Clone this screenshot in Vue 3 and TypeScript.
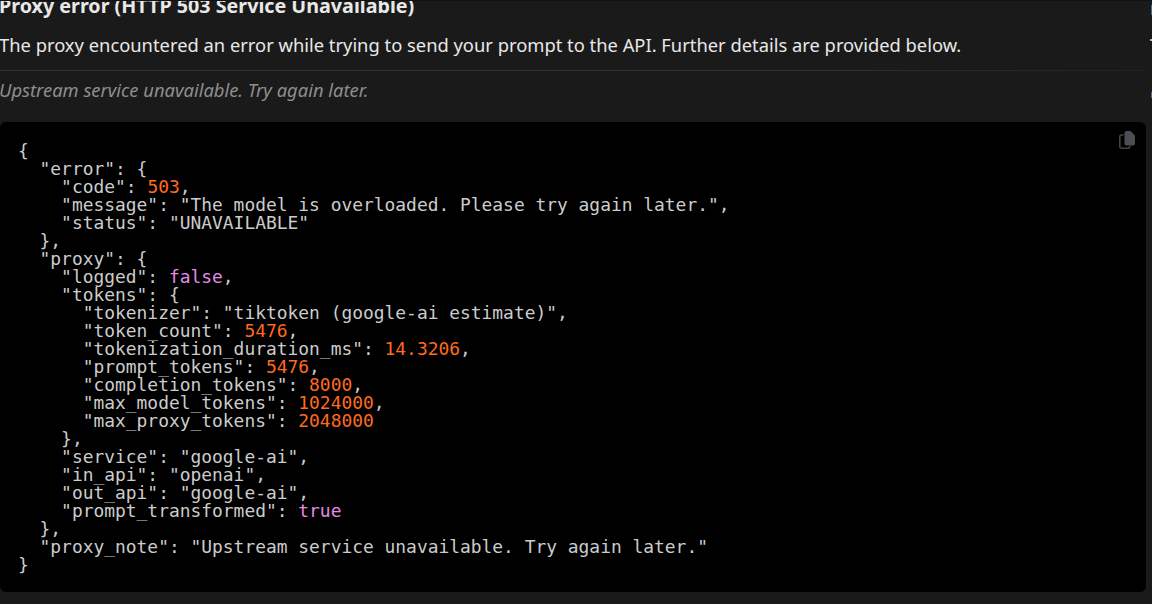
<script setup lang="ts">
const json: [string, string][][] = [
  [['p', '{']],
  [['p', '  "error": {']],
  [['p', '    "code": '], ['n', '503'], ['p', ',']],
  [['p', '    "message": "The model is overloaded. Please try again later.",']],
  [['p', '    "status": "UNAVAILABLE"']],
  [['p', '  },']],
  [['p', '  "proxy": {']],
  [['p', '    "logged": '], ['b', 'false'], ['p', ',']],
  [['p', '    "tokens": {']],
  [['p', '      "tokenizer": "tiktoken (google-ai estimate)",']],
  [['p', '      "token_count": '], ['n', '5476'], ['p', ',']],
  [['p', '      "tokenization_duration_ms": '], ['n', '14.3206'], ['p', ',']],
  [['p', '      "prompt_tokens": '], ['n', '5476'], ['p', ',']],
  [['p', '      "completion_tokens": '], ['n', '8000'], ['p', ',']],
  [['p', '      "max_model_tokens": '], ['n', '1024000'], ['p', ',']],
  [['p', '      "max_proxy_tokens": '], ['n', '2048000']],
  [['p', '    },']],
  [['p', '    "service": "google-ai",']],
  [['p', '    "in_api": "openai",']],
  [['p', '    "out_api": "google-ai",']],
  [['p', '    "prompt_transformed": '], ['b', 'true']],
  [['p', '  },']],
  [['p', '  "proxy_note": "Upstream service unavailable. Try again later."']],
  [['p', '}']],
]
</script>

<template>
  <main class="page">
    <article class="message">
      <h2 class="title">Proxy error (HTTP 503 Service Unavailable)</h2>
      <p class="lead">The proxy encountered an error while trying to send your prompt to the API. Further details are provided below.</p>
      <hr class="rule" />
      <p class="note">Upstream service unavailable. Try again later.</p>
      <div class="block">
        <button class="copy" type="button" aria-label="Copy">
          <svg width="16" height="18" viewBox="0 0 16 18">
            <path d="M4.500 4H2.500A1.700 1.700 0 0 0 .8 5.700v9.800A1.700 1.700 0 0 0 2.500 17.200H9a1.700 1.700 0 0 0 1.700-1.700V15" fill="none" stroke="#444" stroke-width="1.600" />
            <path d="M5.500 2A2 2 0 0 1 7.500 0H11.500L16 4.500V12.500a2 2 0 0 1-2 2H7.500a2 2 0 0 1-2-2Z" fill="#4b4f55" />
          </svg>
        </button>
        <pre class="code"><code><span v-for="(line, i) in json" :key="i" class="line"><span v-for="(tok, j) in line" :key="j" :class="tok[0]">{{ tok[1] }}</span></span></code></pre>
      </div>
    </article>
    <div class="top-edge"></div>
    <div class="scroll-marks">
      <i class="mark m1"></i>
      <i class="mark m2"></i>
      <i class="mark m3"></i>
    </div>
  </main>
</template>

<style>
html, body { margin: 0; background: #1a1a1a; overflow: hidden; }
</style>

<style scoped>
.page {
  position: relative;
  width: 1152px;
  height: 604px;
  overflow: hidden;
  background: #1a1a1a;
  font-family: "Noto Sans", sans-serif;
  color: #e8e8e8;
}
.message { width: 1146px; margin-top: -7px; }
.title {
  margin: 0 0 0 -1px;
  font-size: 19.72px;
  line-height: 25px;
  font-weight: 700;
}
.lead {
  margin: 13px 0 0 -1px;
  font-size: 18.35px;
  line-height: 27px;
}
.rule {
  margin: 12px 0 0;
  height: 1px;
  border: 0;
  background: linear-gradient(to right, #303030, #303030 70%, #222);
}
.note {
  margin: 5px 0 0 -1px;
  font-size: 18.35px;
  line-height: 27px;
  font-style: italic;
  color: #8e8e8e;
}
.block {
  position: relative;
  margin-top: 19px;
  height: 470px;
  box-sizing: border-box;
  padding: 20px 18px;
  background: #000;
  border-radius: 6px;
}
.copy {
  position: absolute;
  top: 9px;
  right: 11px;
  padding: 0;
  border: 0;
  background: none;
  line-height: 0;
}
.code {
  margin: 0;
  font-family: "DejaVu Sans Mono", monospace;
  font-size: 17.92px;
  line-height: 18px;
  color: #cccccc;
}
.line { display: block; height: 18px; }
.n { color: #ff6a1f; }
.b { color: #e58ae5; }
.top-edge { position: absolute; top: 0; left: 0; right: 0; height: 1px; background: #111; }
.mark { position: absolute; right: 0; width: 1px; background: #3b6ea5; }
.m1 { top: 5px; height: 10px; }
.m2 { top: 39px; height: 2px; width: 2px; background: #9ec3e6; }
.m3 { top: 92px; height: 6px; }
</style>
